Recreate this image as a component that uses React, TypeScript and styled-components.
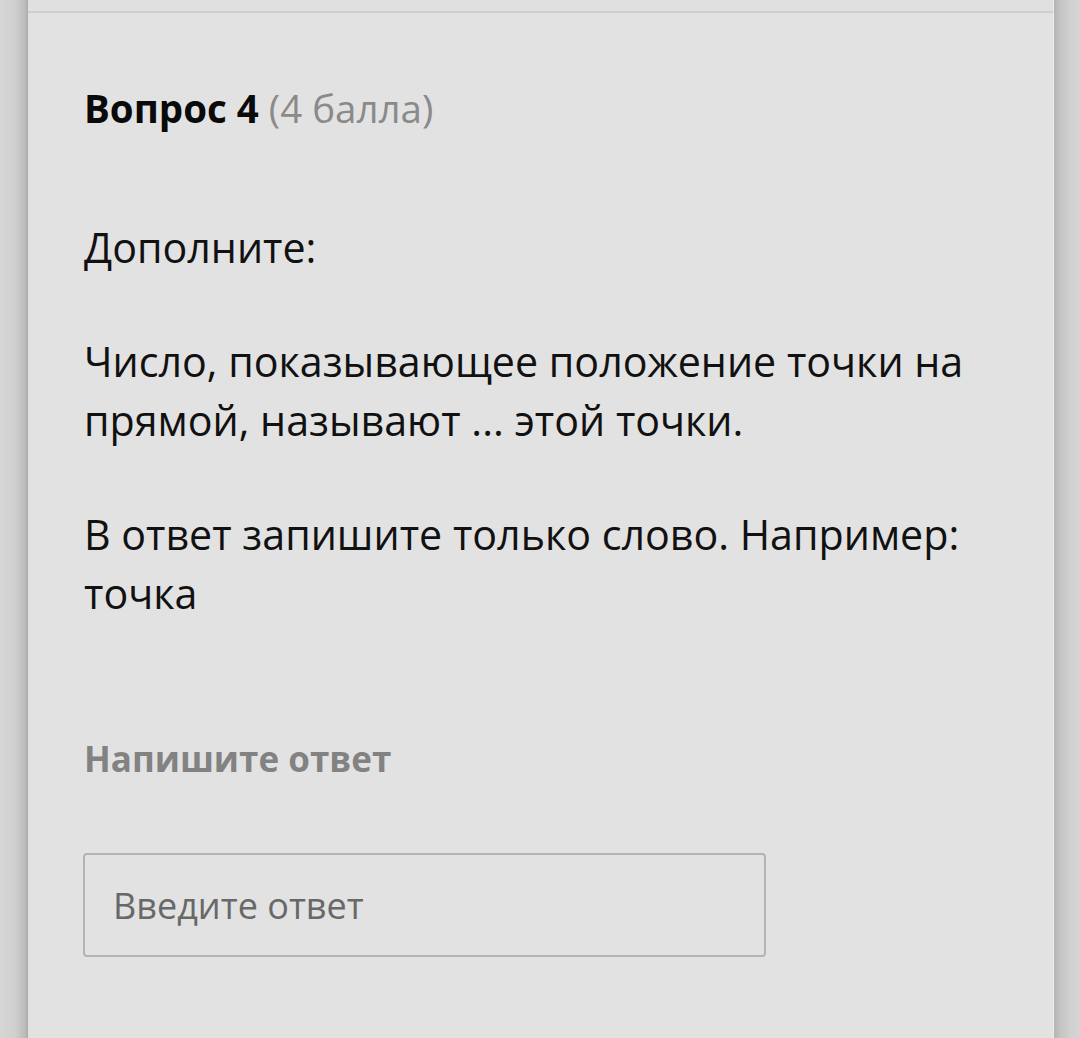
import React from "react";
import styled, { createGlobalStyle } from "styled-components";

const Global = createGlobalStyle`
  html, body { margin: 0; padding: 0; background: #d6d6d6; }
  body { font-family: "Open Sans", "Noto Sans", sans-serif; }
`;

const Page = styled.div`
  display: flex;
  width: 1080px;
  height: 1038px;
  overflow: hidden;
`;

const LeftGutter = styled.div`
  width: 28px;
  flex: none;
  background: linear-gradient(to right, #d7d7d7 0%, #cfcfcf 55%, #b9b9b9 92%, #a9a9a9 100%);
`;

const RightGutter = styled.div`
  flex: 1;
  background: linear-gradient(to right, #b4b4b4 0%, #c4c4c4 25%, #d0d0d0 60%, #d6d6d6 100%);
`;

const Card = styled.div`
  width: 1026px;
  flex: none;
  display: flex;
  flex-direction: column;
  background: #e2e2e2;
  border-right: 1px solid #ececec;
  box-sizing: border-box;
`;

const TopStrip = styled.div`
  height: 11px;
  background: #e0e0e0;
  border-bottom: 2px solid #cfcfcf;
`;

const Content = styled.div`
  padding: 69px 0 0 56px;
  display: flex;
  flex-direction: column;
`;

const Title = styled.h2`
  margin: 0;
  font-size: 38.5px;
  line-height: 52px;
  font-weight: 700;
  color: #0a0a0a;
`;

const Points = styled.span`
  font-weight: 400;
  color: #8a8a8a;
`;

const Body = styled.div`
  margin-top: 84px;
  width: 900px;
  font-size: 41.2px;
  line-height: 59px;
  color: #111111;
`;

const Para = styled.p`
  margin: 0 0 55px 0;
`;

const Label = styled.div`
  margin-top: 57px;
  font-size: 35px;
  line-height: 48px;
  font-weight: 700;
  color: #828282;
`;

const Input = styled.input`
  margin: 70px 0 0 -1px;
  width: 683px;
  height: 104px;
  box-sizing: border-box;
  padding: 0 0 0 28px;
  border: 2px solid #b3b3b3;
  border-radius: 4px;
  background: #e2e2e2;
  font-family: "Open Sans", "Noto Sans", sans-serif;
  font-size: 36px;
  color: #333;
  outline: none;
  &::placeholder {
    color: #686868;
  }
`;

export default function App() {
  return (
    <Page>
      <Global />
      <LeftGutter />
      <Card>
        <TopStrip />
        <Content>
          <Title>
            Вопрос 4 <Points>(4 балла)</Points>
          </Title>
          <Body>
            <Para>Дополните:</Para>
            <Para>Число, показывающее положение точки на прямой, называют ... этой точки.</Para>
            <Para>В ответ запишите только слово. Например: точка</Para>
          </Body>
          <Label>Напишите ответ</Label>
          <Input placeholder="Введите ответ" />
        </Content>
      </Card>
      <RightGutter />
    </Page>
  );
}
